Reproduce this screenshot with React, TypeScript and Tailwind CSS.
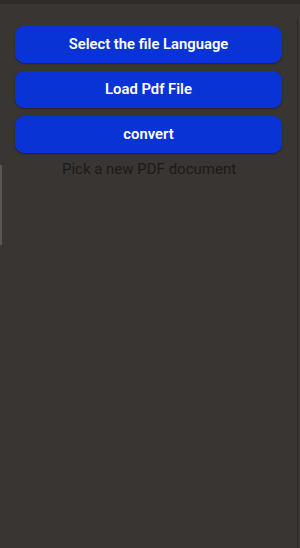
export default function App() {
  const btn =
    "h-[37px] w-full rounded-[9px] bg-[#0a33d6] text-white text-[14.8px] font-semibold flex items-center justify-center shadow-[0_1px_2px_rgba(0,0,0,0.35)]";
  return (
    <div
      className="relative w-[300px] h-[548px] bg-[#393532] overflow-hidden"
      style={{ fontFamily: "Roboto, 'Liberation Sans', sans-serif" }}
    >
      <div className="h-[4px] bg-[#2e2b29]" />
      <div className="pl-[15px] pr-[18px] pt-[22px] flex flex-col gap-[8px]">
        <button className={btn}>Select the file Language</button>
        <button className={btn}>Load Pdf File</button>
        <button className={btn}>convert</button>
        <div className="text-center text-[15px] leading-[18px] text-[#1c1a19] -mt-[1px] ml-[1px]">Pick a new PDF document</div>
      </div>
      <div className="absolute left-0 top-[165px] w-[2px] h-[80px] bg-[#5a5654]" />
      <div className="absolute right-[2px] top-[20px] w-[1px] h-[528px] bg-[#2a2726]" />
    </div>
  );
}
